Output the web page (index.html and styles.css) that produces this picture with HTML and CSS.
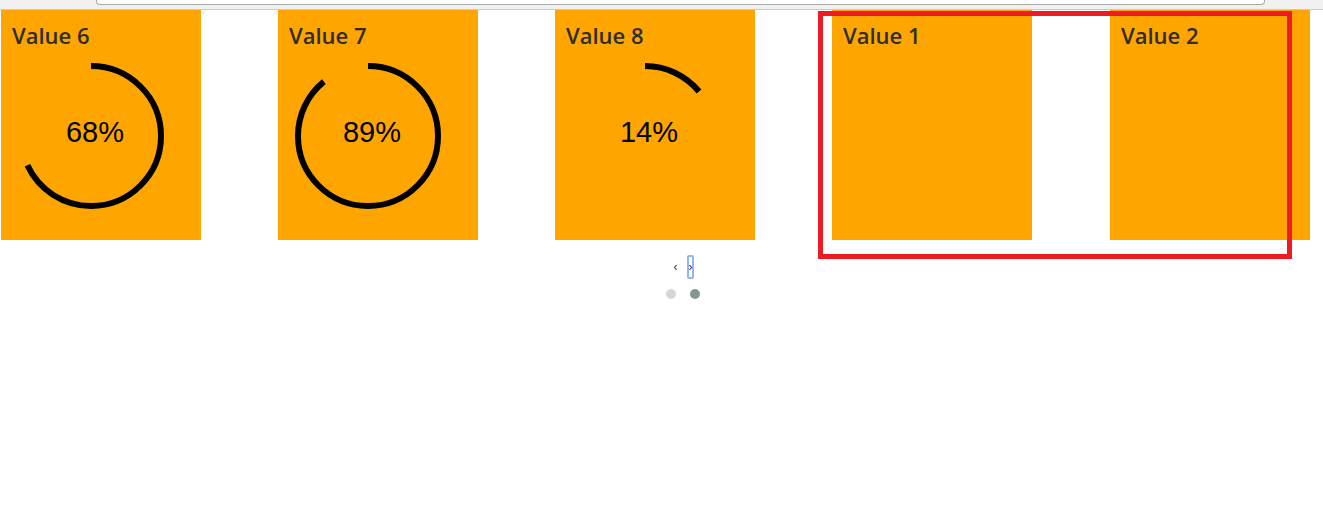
FILE: index.html
```html
<!DOCTYPE html>
<html>
<head>
<meta charset="utf-8">
<link rel="stylesheet" href="styles.css">
</head>
<body>
<div class="topbar"><div class="urlbox"></div></div>
<div class="carousel">
  <div class="track">
    <div class="card">
      <div class="title">Value 6</div>
      <div class="gauge">
        <svg class="ring" viewBox="0 0 150 150" width="150" height="150">
          <circle cx="75" cy="75" r="70" fill="none" stroke="#000" stroke-width="6" stroke-dasharray="299.08 439.82" transform="rotate(-90 75 75)"/>
        </svg>
        <div class="pct">68%</div>
      </div>
    </div>
    <div class="card">
      <div class="title">Value 7</div>
      <div class="gauge">
        <svg class="ring" viewBox="0 0 150 150" width="150" height="150">
          <circle cx="75" cy="75" r="70" fill="none" stroke="#000" stroke-width="6" stroke-dasharray="391.44 439.82" transform="rotate(-90 75 75)"/>
        </svg>
        <div class="pct">89%</div>
      </div>
    </div>
    <div class="card">
      <div class="title">Value 8</div>
      <div class="gauge">
        <svg class="ring" viewBox="0 0 150 150" width="150" height="150">
          <circle cx="75" cy="75" r="70" fill="none" stroke="#000" stroke-width="6" stroke-dasharray="61.58 439.82" transform="rotate(-90 75 75)"/>
        </svg>
        <div class="pct">14%</div>
      </div>
    </div>
    <div class="card">
      <div class="title">Value 1</div>
    </div>
    <div class="card last">
      <div class="title">Value 2</div>
    </div>
  </div>
  <div class="controls">
    <div class="arrows">
      <button class="arrow">&lsaquo;</button>
      <button class="arrow focused">&rsaquo;</button>
    </div>
    <div class="dots">
      <span class="dot"></span>
      <span class="dot active"></span>
    </div>
  </div>
  <div class="highlight"></div>
</div>
</body>
</html>
```

FILE: styles.css
```css
html, body {
  margin: 0;
  padding: 0;
  background: #fff;
  overflow: hidden;
}
.topbar {
  height: 9px;
  background: #f1f1f1;
  border-bottom: 1px solid #c9c9c9;
  position: relative;
  overflow: hidden;
}
.urlbox {
  margin-left: 96px;
  width: 1167px;
  height: 4px;
  background: #fff;
  border: 1px solid #a9a9a9;
  border-top: none;
  border-radius: 0 0 4px 4px;
}
.carousel {
  position: relative;
  width: 1366px;
}
.track {
  display: flex;
  gap: 77px;
  padding-left: 1px;
}
.card {
  flex: 0 0 200px;
  height: 230px;
  background: #ffa500;
  position: relative;
}
.card.last {
  margin-left: 1px;
}
.title {
  font-family: "Open Sans", "Noto Sans", sans-serif;
  font-size: 22px;
  font-weight: 600;
  color: #2e2e2e;
  padding: 11px 0 0 11px;
  line-height: 29px;
}
.gauge {
  position: relative;
  margin: 11px 0 0 15px;
  width: 150px;
  height: 150px;
}
.ring {
  display: block;
}
.pct {
  position: absolute;
  left: 4px;
  top: -4px;
  width: 150px;
  height: 150px;
  display: flex;
  align-items: center;
  justify-content: center;
  font-family: "Liberation Sans", Arial, sans-serif;
  font-size: 29px;
  color: #000;
}
.controls {
  display: flex;
  flex-direction: column;
  align-items: center;
  padding-top: 15px;
}
.arrows {
  display: flex;
  gap: 8px;
  height: 24px;
  align-items: center;
}
.arrow {
  width: 7px;
  height: 24px;
  padding: 0;
  margin: 0;
  border: 2px solid transparent;
  border-radius: 2px;
  background: transparent;
  font-family: "Liberation Sans", Arial, sans-serif;
  font-size: 12px;
  line-height: 18px;
  color: #1f2a5c;
  display: flex;
  align-items: center;
  justify-content: center;
}
.arrow.focused {
  border-color: #8fb5f7;
}
.dots {
  display: flex;
  gap: 14px;
  margin-top: 10px;
}
.dot {
  width: 10px;
  height: 10px;
  border-radius: 50%;
  background: #d6d6d6;
}
.dot.active {
  background: #869791;
}
.highlight {
  position: absolute;
  left: 818px;
  top: 1px;
  width: 464px;
  height: 238px;
  border: 5px solid #ed1c24;
  pointer-events: none;
}
```
